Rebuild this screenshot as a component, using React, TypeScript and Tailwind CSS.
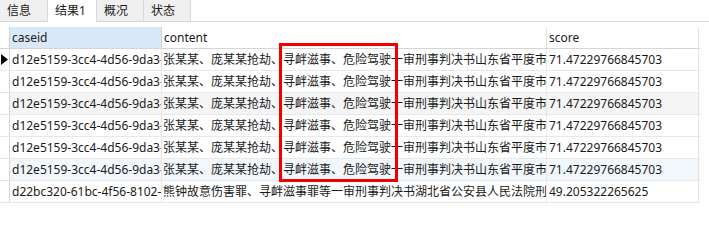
import React from "react";

const FONT = { fontFamily: '"Noto Sans", "Noto Sans CJK SC", sans-serif' };

const ROW = {
  caseid: "d12e5159-3cc4-4d56-9da3-5b1c2e7f8a90",
  content: "张某某、庞某某抢劫、寻衅滋事、危险驾驶一审刑事判决书山东省平度市人民法院",
  score: "71.47229766845703",
};

const ROWS = [
  { ...ROW, bg: "bg-white", current: true },
  { ...ROW, bg: "bg-white" },
  { ...ROW, bg: "bg-[#f5f5f5]" },
  { ...ROW, bg: "bg-white" },
  { ...ROW, bg: "bg-white" },
  { ...ROW, bg: "bg-[#f2f7fc]" },
  {
    caseid: "d22bc320-61bc-4f56-8102-6a4d9c1e0b77",
    content: "熊钟故意伤害罪、寻衅滋事罪等一审刑事判决书湖北省公安县人民法院刑事判决书",
    score: "49.205322265625",
    bg: "bg-white",
  },
];

const TABS = ["信息", "结果1", "概况", "状态"];

export default function App() {
  return (
    <div className="w-[709px] h-[234px] bg-white text-[12px] text-[#1a1a1a] overflow-hidden relative" style={FONT}>
      {/* tab bar */}
      <div className="flex h-[22px]">
        {TABS.map((t, i) => (
          <div
            key={t}
            className={`h-[22px] px-[7px] leading-[21px] border-r border-[#d9d9d9] ${
              i === 1 ? "bg-white w-[49px]" : i === 0 ? "bg-[#f0f0f0] border-b w-[48px]" : "bg-[#f0f0f0] border-b w-[47px]"
            }`}
          >
            {t}
          </div>
        ))}
        <div className="flex-1 border-b border-[#d9d9d9]" />
      </div>

      <div className="h-[5px]" />

      {/* grid */}
      <div className="flex flex-col w-[700px]">
        <div className="flex h-[22px] border-b border-[#d5d5d5]">
          <div className="w-[10px] border-r border-[#d5d5d5]" />
          <div className="w-[152px] bg-[#d9e8f6] border-r border-[#d5d5d5] pl-[2px] leading-[21px]">caseid</div>
          <div className="w-[385px] border-r border-[#e3e3e3] pl-[2px] leading-[21px]">content</div>
          <div className="w-[152px] border-r border-[#e3e3e3] pl-[2px] leading-[21px]">score</div>
        </div>
        {ROWS.map((r, i) => (
          <div key={i} className={`flex h-[22px] border-b border-[#e8e8e8] ${r.bg}`}>
            <div className="w-[10px] bg-white border-r border-[#d5d5d5] flex items-center">
              {r.current && (
                <svg width="8" height="11" viewBox="0 0 8 11" className="ml-[1px]">
                  <path d="M0 0 L7 5.5 L0 11 Z" fill="#000" />
                </svg>
              )}
            </div>
            <div className="w-[152px] border-r border-[#e8e8e8] pl-[2px] leading-[21px] whitespace-nowrap overflow-hidden">
              {r.caseid}
            </div>
            <div className="w-[385px] border-r border-[#e8e8e8] pl-[1px] leading-[21px] whitespace-nowrap overflow-hidden">
              {r.content}
            </div>
            <div className="w-[152px] border-r border-[#e3e3e3] pl-[2px] leading-[21px] whitespace-nowrap overflow-hidden">
              {r.score}
            </div>
          </div>
        ))}
      </div>

      {/* highlight box */}
      <div className="absolute left-[279px] top-[43px] w-[119px] h-[139px] border-[3px] border-[#f00000]" />
    </div>
  );
}
